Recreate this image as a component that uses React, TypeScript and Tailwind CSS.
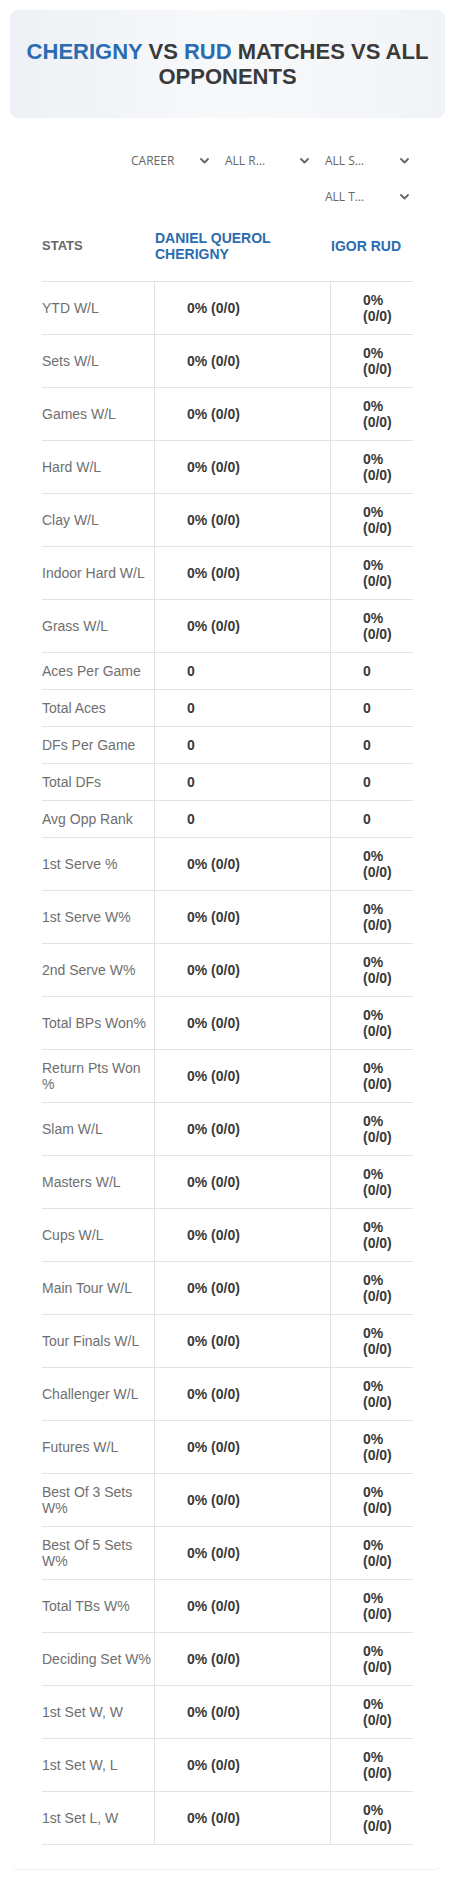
import React from "react";

type Row = { label: string; a: string; b: string };

const pct = "0% (0/0)";
const rows: Row[] = [
  "YTD W/L",
  "Sets W/L",
  "Games W/L",
  "Hard W/L",
  "Clay W/L",
  "Indoor Hard W/L",
  "Grass W/L",
].map((l) => ({ label: l, a: pct, b: pct }))
  .concat(
    ["Aces Per Game", "Total Aces", "DFs Per Game", "Total DFs", "Avg Opp Rank"].map((l) => ({
      label: l,
      a: "0",
      b: "0",
    }))
  )
  .concat(
    [
      "1st Serve %",
      "1st Serve W%",
      "2nd Serve W%",
      "Total BPs Won%",
      "Return Pts Won %",
      "Slam W/L",
      "Masters W/L",
      "Cups W/L",
      "Main Tour W/L",
      "Tour Finals W/L",
      "Challenger W/L",
      "Futures W/L",
      "Best Of 3 Sets W%",
      "Best Of 5 Sets W%",
      "Total TBs W%",
      "Deciding Set W%",
      "1st Set W, W",
      "1st Set W, L",
      "1st Set L, W",
    ].map((l) => ({ label: l, a: pct, b: pct }))
  );

function Chevron() {
  return (
    <svg width="9" height="6" viewBox="0 0 9 6" className="shrink-0">
      <polyline points="1,1 4.5,4.5 8,1" fill="none" stroke="#666" strokeWidth="1.8" strokeLinecap="round" strokeLinejoin="round" />
    </svg>
  );
}

function Select({ label, w }: { label: string; w: string }) {
  return (
    <div className={`${w} h-[28px] flex items-center justify-between pl-[4px] pr-[4px] text-[12px] text-[#666] font-['Open_Sans',sans-serif]`}>
      <span>{label}</span>
      <Chevron />
    </div>
  );
}

export default function App() {
  return (
    <div className="w-[455px] min-h-[1880px] bg-white font-['Liberation_Sans',Arial,sans-serif]">
      <div className="pt-[10px] px-[10px]">
        <div className="h-[108px] rounded-lg bg-gradient-to-r from-[#edf1f5] via-[#f8f9fb] to-[#f1f4f7] flex items-center justify-center px-3">
          <h1 className="text-center text-[22px] leading-[25px] font-bold text-[#3a3a3a]">
            <span className="text-[#2b6cb0]">CHERIGNY</span> VS <span className="text-[#2b6cb0]">RUD</span> MATCHES VS ALL OPPONENTS
          </h1>
        </div>
      </div>

      <div className="mx-[12px] border-b border-[#efefef] rounded-b-lg pb-[24px]">
        <div className="mx-[30px]">
          <div className="pt-[29px] flex flex-wrap justify-end gap-x-[8px] gap-y-[8px]">
            <Select label="CAREER" w="w-[86px]" />
            <Select label="ALL R…" w="w-[92px]" />
            <Select label="ALL S…" w="w-[92px]" />
            <Select label="ALL T…" w="w-[92px]" />
          </div>

          <div className="grid grid-cols-[112px_176px_83px] items-stretch">
            <div className="py-[19px] border-b border-[#e3e3e3] flex items-center text-[13px] font-bold text-[#666] leading-[16px]">
              STATS
            </div>
            <div className="py-[19px] border-b border-[#e3e3e3] flex items-center pl-[1px] text-[14px] font-bold text-[#2b6cb0] leading-[16px]">
              DANIEL QUEROL CHERIGNY
            </div>
            <div className="py-[19px] border-b border-[#e3e3e3] flex items-center pl-[1px] text-[14px] font-bold text-[#2b6cb0] leading-[16px]">
              IGOR RUD
            </div>
            {rows.map((r) => (
              <React.Fragment key={r.label}>
                <div className="py-[10px] border-b border-[#e3e3e3] flex items-center text-[14px] leading-[16px] text-[#6f6f6f]">
                  {r.label}
                </div>
                <div className="py-[10px] border-b border-l border-[#e3e3e3] flex items-center pl-[32px] text-[14px] leading-[16px] font-bold text-[#3a3a3a]">
                  {r.a}
                </div>
                <div className="py-[10px] border-b border-l border-[#e3e3e3] flex items-center pl-[32px] text-[14px] leading-[16px] font-bold text-[#3a3a3a]">
                  {r.b}
                </div>
              </React.Fragment>
            ))}
          </div>
        </div>
      </div>
    </div>
  );
}
